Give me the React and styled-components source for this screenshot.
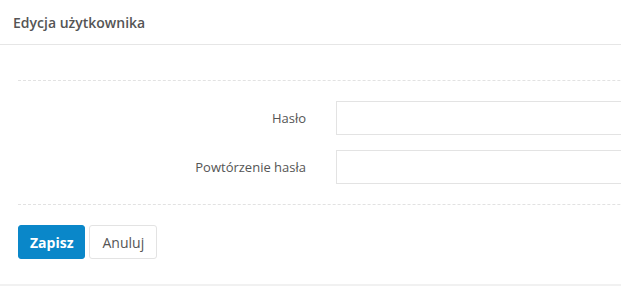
import React from "react";
import styled, { createGlobalStyle } from "styled-components";

const Global = createGlobalStyle`
  html, body { margin: 0; padding: 0; overflow: hidden; }
  body {
    background: #f1f1f1;
    font-family: "Open Sans", "Liberation Sans", sans-serif;
    color: #555;
  }
`;

const Panel = styled.div`
  width: 900px;
  background: #fff;
  padding-bottom: 25px;
`;

const Header = styled.div`
  height: 44px;
  display: flex;
  align-items: center;
  padding: 0 13px;
  border-bottom: 1px solid #e6e6e6;
  font-size: 14px;
  font-weight: 600;
  color: #555;
`;

const Body = styled.div`
  padding: 35px 0 0 18px;
`;

const Fieldset = styled.div`
  border-top: 1px dashed #e2e2e2;
  border-bottom: 1px dashed #e2e2e2;
  padding: 20px 0 20px;
  display: flex;
  flex-direction: column;
  gap: 15px;
`;

const Row = styled.div`
  display: grid;
  grid-template-columns: 288px 1fr;
  column-gap: 30px;
  align-items: center;
`;

const Label = styled.label`
  text-align: right;
  font-size: 13px;
  color: #555;
`;

const Input = styled.input`
  box-sizing: border-box;
  height: 34px;
  width: 100%;
  border: 1px solid #e3e3e3;
  border-radius: 0;
  background: #fff;
  outline: none;
  font: inherit;
`;

const Actions = styled.div`
  display: flex;
  gap: 4px;
  padding-top: 20px;
`;

const Button = styled.button`
  box-sizing: border-box;
  height: 34px;
  padding: 0 ${(p) => (p.$primary ? "11px" : "12px")};
  border-radius: 3px;
  font-family: "Open Sans", "Liberation Sans", sans-serif;
  font-size: 14px;
  font-weight: ${(p) => (p.$primary ? 700 : 400)};
  color: ${(p) => (p.$primary ? "#fff" : "#555")};
  background: ${(p) => (p.$primary ? "#0a87c9" : "#fff")};
  border: 1px solid ${(p) => (p.$primary ? "#0a87c9" : "#e3e3e3")};
  cursor: pointer;
`;

export default function App() {
  return (
    <>
      <Global />
      <Panel>
        <Header>Edycja użytkownika</Header>
        <Body>
          <Fieldset>
            <Row>
              <Label>Hasło</Label>
              <Input type="password" />
            </Row>
            <Row>
              <Label>Powtórzenie hasła</Label>
              <Input type="password" />
            </Row>
          </Fieldset>
          <Actions>
            <Button $primary>Zapisz</Button>
            <Button>Anuluj</Button>
          </Actions>
        </Body>
      </Panel>
    </>
  );
}
